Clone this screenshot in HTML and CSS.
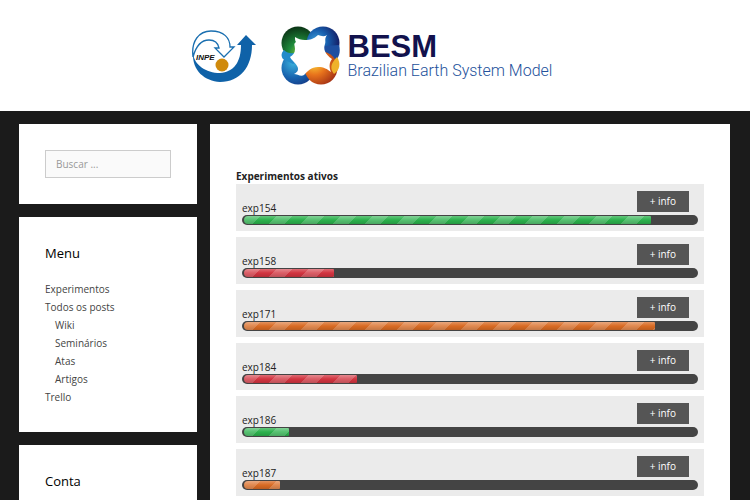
FILE: index.html
```html
<!DOCTYPE html>
<html lang="pt-BR">
<head>
<meta charset="utf-8">
<meta name="viewport" content="width=device-width, initial-scale=1">
<title>BESM - Brazilian Earth System Model</title>
<link rel="stylesheet" href="styles.css">
</head>
<body>
<header class="site-header">
  <a class="inpe" href="#" aria-label="INPE">
    <svg width="66" height="56" viewBox="0 0 66 56">
      <path d="M2 24 C3 36 15 44 29 44 C43 43 50 33 50 16 H46 L55 6 L65 16 H61 C61 38 49 53 29 53 C14 52 1 42 2 24Z" fill="#0f62a8"/>
      <path d="M2 28 C0 12 8 2 20 2 C33 2 39 9 39 18 H43 L33 28 L24 19 H28 C27 14 23 11 18 11 C11 11 5 17 2 28Z" fill="#fff" stroke="#1a6fb0" stroke-width="1.3"/>
      <circle cx="31" cy="36" r="6.5" fill="#d08a0c"/>
      <text class="inpe-text" x="5" y="31">INPE</text>
    </svg>
  </a>
  <a class="brand" href="#">
    <svg width="60" height="60" viewBox="0 0 60 60" aria-hidden="true">
      <defs>
        <radialGradient id="leaf" cx=".55" cy=".8" r=".8"><stop offset="0" stop-color="#8cc43a"/><stop offset=".4" stop-color="#1f8c3c"/><stop offset="1" stop-color="#0b3315"/></radialGradient>
        <radialGradient id="sky" cx=".3" cy=".45" r=".75"><stop offset="0" stop-color="#3fa4dc"/><stop offset=".45" stop-color="#175fae"/><stop offset="1" stop-color="#14145a"/></radialGradient>
        <radialGradient id="sea" cx=".35" cy=".35" r=".75"><stop offset="0" stop-color="#3ab0dc"/><stop offset=".6" stop-color="#1763ae"/><stop offset="1" stop-color="#153a86"/></radialGradient>
        <radialGradient id="fire" cx=".3" cy=".35" r=".8"><stop offset="0" stop-color="#fbd338"/><stop offset=".45" stop-color="#e8731c"/><stop offset="1" stop-color="#9c2a14"/></radialGradient>
      </defs>
      <circle cx="17" cy="42" r="16.5" fill="url(#sea)"/>
      <circle cx="17" cy="17" r="16.5" fill="url(#leaf)"/>
      <circle cx="42" cy="17" r="16.5" fill="url(#sky)"/>
      <path d="M42 20 C44 28 50 31 53 36 C58 32 60 26 58 19Z" fill="#1e4fa0"/>
      <circle cx="40" cy="42" r="16.5" fill="url(#fire)"/>
      <path d="M56 31 C60 37 59 44 53 48 C49 43 49 38 56 31Z" fill="#efb22a"/>
      <path d="M2 33 C0 30 0 27 3 24 C8 29 15 28 22 23 V33 L12 38Z" fill="#238bca"/>
      <path d="M14 11 C17 13 20 14 24 14 C29 14 33 13 37 9 C40 10 43 11 46 9 C43 13 45 15 44 18 C42 23 44 28 51 33 C48 37 48 41 50 46 C46 43 43 41 37 41 C30 41 27 45 23 49 C20 51 16 48 13 48 C17 46 18 43 16 40 C15 37 11 35 9 31 C12 29 14 27 14 23 C14 19 12 18 15 16 C14 15 14 13 14 11Z" fill="#fff"/>
    </svg>
    <span class="brand-text">
      <strong class="brand-name">BESM</strong>
      <span class="brand-tag">Brazilian Earth System Model</span>
    </span>
  </a>
</header>
<div class="page">
  <aside class="sidebar">
    <section class="widget">
      <form role="search"><input class="search" type="search" placeholder="Buscar ..." aria-label="Buscar"></form>
    </section>
    <section class="widget">
      <h2>Menu</h2>
      <ul>
        <li><a href="#">Experimentos</a></li>
        <li><a href="#">Todos os posts</a>
          <ul>
            <li><a href="#">Wiki</a></li>
            <li><a href="#">Seminários</a></li>
            <li><a href="#">Atas</a></li>
            <li><a href="#">Artigos</a></li>
          </ul>
        </li>
        <li><a href="#">Trello</a></li>
      </ul>
    </section>
    <section class="widget">
      <h2>Conta</h2>
    </section>
  </aside>
  <main class="content">
    <h1>Experimentos ativos</h1>
    <article class="exp"><div class="exp-head"><span>exp154</span><button type="button">+ info</button></div><div class="meter"><div class="fill green" style="width:90%"></div></div></article>
    <article class="exp"><div class="exp-head"><span>exp158</span><button type="button">+ info</button></div><div class="meter"><div class="fill red" style="width:20%"></div></div></article>
    <article class="exp"><div class="exp-head"><span>exp171</span><button type="button">+ info</button></div><div class="meter"><div class="fill orange" style="width:91%"></div></div></article>
    <article class="exp"><div class="exp-head"><span>exp184</span><button type="button">+ info</button></div><div class="meter"><div class="fill red" style="width:25%"></div></div></article>
    <article class="exp"><div class="exp-head"><span>exp186</span><button type="button">+ info</button></div><div class="meter"><div class="fill green" style="width:10%"></div></div></article>
    <article class="exp"><div class="exp-head"><span>exp187</span><button type="button">+ info</button></div><div class="meter"><div class="fill orange" style="width:8%"></div></div></article>
  </main>
</div>
</body>
</html>
```
FILE: styles.css
```css
* { box-sizing: border-box; }
body {
  margin: 0;
  background: #1b1b1b;
  color: #222;
  font: 10px/18px "Open Sans", sans-serif;
}
a { color: #444; text-decoration: none; }
ul { margin: 0; padding: 0; list-style: none; }
ul ul { padding-left: 10px; }

.site-header {
  display: flex;
  justify-content: center;
  gap: 24px;
  padding: 26px 7px 25px 0;
  background: #fff;
}
.inpe { padding-top: 3px; }
.inpe svg, .brand svg { display: block; }
.inpe-text { font: italic bold 8px "Liberation Sans", sans-serif; fill: #111; }
.brand { display: flex; gap: 7px; }
.brand-text { display: flex; flex-direction: column; padding-top: 7px; }
.brand-name { font: 700 31px/28px "Liberation Sans", sans-serif; color: #12124d; }
.brand-tag { font: 300 16px/20px Roboto, sans-serif; color: #23519b; white-space: nowrap; }

.page {
  display: grid;
  grid-template-columns: 178fr 520fr;
  gap: 13px;
  padding: 13px 20px 0 19px;
}
.sidebar { display: flex; flex-direction: column; gap: 13px; }
.widget { padding: 26px; background: #fff; }
.widget h2 { margin: 0 0 17px; font-size: 13px; line-height: 20px; font-weight: 400; color: #000; }
.search {
  display: block;
  width: 100%;
  height: 28px;
  padding: 0 10px;
  border: 1px solid #ccc;
  background: #fafafa;
  font: 10px/18px "Open Sans", sans-serif;
}
.search::placeholder { color: #999; opacity: 1; }

.content { padding: 44px 26px 26px; background: #fff; }
.content h1 { margin: 0; font-size: 10px; line-height: 16px; }
.exp { margin-bottom: 6px; padding: 7px 6px 6px; background: #ebebeb; }
.exp-head { display: flex; justify-content: space-between; align-items: flex-start; height: 24px; }
.exp-head span { padding-top: 8px; }
.exp button {
  margin-right: 9px;
  padding: 0 13px;
  border: 0;
  background: #555;
  color: #fff;
  font: 10px/21px "Open Sans", sans-serif;
}
.meter { height: 10px; padding: 1px 2px; border-radius: 5px; background: #444; }
.fill {
  height: 8px;
  border-radius: 4px 1px 1px 4px;
  background-image:
    linear-gradient(#fff4, #fff0 50%, #0002),
    linear-gradient(135deg, #fff3 25%, #fff0 25% 50%, #fff3 50% 75%, #fff0 75%);
  background-size: auto, 32px 32px;
}
.green { background-color: #2bb14c; }
.red { background-color: #d23440; }
.orange { background-color: #d96b24; }
```
